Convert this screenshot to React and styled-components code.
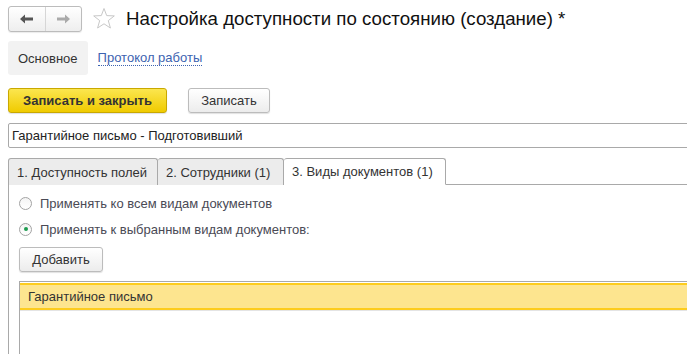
import React from "react";
import styled, { createGlobalStyle } from "styled-components";

const GlobalStyle = createGlobalStyle`
  html, body {
    margin: 0;
    padding: 0;
    background: #fff;
    overflow: hidden;
  }
  body {
    font-family: "Liberation Sans", Arial, sans-serif;
    font-size: 13px;
    color: #333;
  }
`;

const Page = styled.div`
  width: 740px;
  padding: 6px 0 0 8px;
  box-sizing: border-box;
  white-space: nowrap;
`;

const Header = styled.div`
  display: flex;
  align-items: center;
  height: 26px;
`;

const NavGroup = styled.div`
  display: flex;
  width: 74px;
  height: 26px;
  box-sizing: border-box;
  border: 1px solid #bcbcbc;
  border-radius: 3px;
  background: linear-gradient(#ffffff, #eeeeee);
  box-shadow: 0 1px 1px rgba(0, 0, 0, 0.08);
`;

const NavButton = styled.div`
  flex: 1;
  display: flex;
  align-items: center;
  justify-content: center;
  & + & {
    border-left: 1px solid #d6d6d6;
  }
`;

const Star = styled.div`
  margin-left: 10px;
  width: 24px;
  height: 24px;
  display: flex;
`;

const Title = styled.h1`
  margin: 0 0 0 10px;
  font-size: 18.7px;
  font-weight: normal;
  color: #111;
`;

const PageTabs = styled.div`
  display: flex;
  align-items: center;
  margin-top: 9px;
  height: 34px;
`;

const PageTab = styled.div`
  height: 34px;
  display: flex;
  align-items: center;
  padding: 0 10px;
  border-radius: 3px;
  background: ${(p) => (p.active ? "#f2f2f2" : "transparent")};
  color: ${(p) => (p.active ? "#333" : "#3d63b0")};
  & span {
    border-bottom: ${(p) => (p.active ? "none" : "1px dotted #3d63b0")};
    line-height: 14px;
  }
`;

const Toolbar = styled.div`
  display: flex;
  gap: 21px;
  margin-top: 13px;
`;

const Button = styled.button`
  height: 25px;
  box-sizing: border-box;
  padding: 0;
  font-family: inherit;
  font-size: 13px;
  font-weight: ${(p) => (p.primary ? "bold" : "normal")};
  color: #333;
  white-space: nowrap;
  border-radius: 3px;
  border: 1px solid ${(p) => (p.primary ? "#c9a800" : "#bcbcbc")};
  background: ${(p) =>
    p.primary
      ? "linear-gradient(#fbe64f, #f0cb00)"
      : "linear-gradient(#ffffff, #ececec)"};
  box-shadow: 0 1px 1px rgba(0, 0, 0, 0.12);
  width: ${(p) => p.width}px;
`;

const Field = styled.div`
  margin-top: 10px;
  height: 25px;
  box-sizing: border-box;
  border: 1px solid #a9a9a9;
  border-radius: 2px;
  display: flex;
  align-items: center;
  padding-left: 3px;
  color: #222;
`;

const TabBar = styled.div`
  display: flex;
  margin-top: 10px;
  height: 27px;
  box-sizing: border-box;
  border-bottom: 1px solid #a9a9a9;
`;

const Tab = styled.div`
  height: 27px;
  box-sizing: border-box;
  padding: 0 8px;
  display: flex;
  align-items: center;
  color: #333;
  border: 1px solid #a9a9a9;
  border-left-width: ${(p) => (p.first ? 1 : 0)}px;
  border-bottom: ${(p) => (p.active ? "1px solid #fff" : "none")};
  border-radius: 3px 3px 0 0;
  background: ${(p) => (p.active ? "#fff" : "#ececec")};
  margin-bottom: ${(p) => (p.active ? -1 : 0)}px;
  width: ${(p) => p.width}px;
`;

const Panel = styled.div`
  border-left: 1px solid #a9a9a9;
  padding: 11px 0 0 10px;
  height: 200px;
`;

const RadioRow = styled.label`
  display: flex;
  align-items: center;
  gap: 8px;
  height: 14px;
  margin-bottom: 12px;
  color: #4a4a55;
`;

const RadioCircle = styled.span`
  width: 13px;
  height: 13px;
  box-sizing: border-box;
  border-radius: 50%;
  border: 1px solid #a3a3a3;
  background: linear-gradient(#f4f4f4, #ffffff);
  display: flex;
  align-items: center;
  justify-content: center;
  &::after {
    content: "";
    width: 4px;
    height: 4px;
    border-radius: 50%;
    background: ${(p) => (p.checked ? "#1d9b4f" : "transparent")};
  }
`;

const AddButton = styled(Button)`
  margin-top: -1px;
`;

const Table = styled.div`
  margin-top: 9px;
  border-top: 1px solid #a9a9a9;
  border-left: 1px solid #a9a9a9;
  height: 100px;
`;

const Row = styled.div`
  height: 27px;
  box-sizing: border-box;
  margin-top: 1px;
  display: flex;
  align-items: center;
  padding-left: 8px;
  color: #333;
  background: #fde58f;
  border-top: 2px solid #fdcc1e;
  border-bottom: 2px solid #fdcc1e;
  box-shadow: 0 1px 0 #e4e4e4;
`;

const ArrowLeft = ({ color }) => (
  <svg width="14" height="10" viewBox="0 0 14 10">
    <path d="M0 5 L5 0.5 L5 3.6 L13 3.6 L13 6.4 L5 6.4 L5 9.5 Z" fill={color} />
  </svg>
);

const ArrowRight = ({ color }) => (
  <svg width="14" height="10" viewBox="0 0 14 10">
    <path d="M14 5 L9 0.5 L9 3.6 L1 3.6 L1 6.4 L9 6.4 L9 9.5 Z" fill={color} />
  </svg>
);

const StarIcon = () => (
  <svg width="24" height="24" viewBox="0 0 24 24">
    <path
      d="M12 1.5 L14.7 8.6 L22.3 8.9 L16.3 13.6 L18.4 21 L12 16.8 L5.6 21 L7.7 13.6 L1.7 8.9 L9.3 8.6 Z"
      fill="none"
      stroke="#c8c8c8"
      strokeWidth="1"
    />
  </svg>
);

export default function App() {
  return (
    <>
      <GlobalStyle />
      <Page>
        <Header>
          <NavGroup>
            <NavButton>
              <ArrowLeft color="#555" />
            </NavButton>
            <NavButton>
              <ArrowRight color="#aaa" />
            </NavButton>
          </NavGroup>
          <Star>
            <StarIcon />
          </Star>
          <Title>Настройка доступности по состоянию (создание) *</Title>
        </Header>

        <PageTabs>
          <PageTab active>Основное</PageTab>
          <PageTab>
            <span>Протокол работы</span>
          </PageTab>
        </PageTabs>

        <Toolbar>
          <Button primary width={159}>
            Записать и закрыть
          </Button>
          <Button width={82}>Записать</Button>
        </Toolbar>

        <Field>Гарантийное письмо - Подготовивший</Field>

        <TabBar>
          <Tab first width={150}>
            1. Доступность полей
          </Tab>
          <Tab width={126}>2. Сотрудники (1)</Tab>
          <Tab active width={162}>
            3. Виды документов (1)
          </Tab>
        </TabBar>

        <Panel>
          <RadioRow>
            <RadioCircle />
            Применять ко всем видам документов
          </RadioRow>
          <RadioRow>
            <RadioCircle checked />
            Применять к выбранным видам документов:
          </RadioRow>
          <AddButton width={84}>Добавить</AddButton>
          <Table>
            <Row>Гарантийное письмо</Row>
          </Table>
        </Panel>
      </Page>
    </>
  );
}
